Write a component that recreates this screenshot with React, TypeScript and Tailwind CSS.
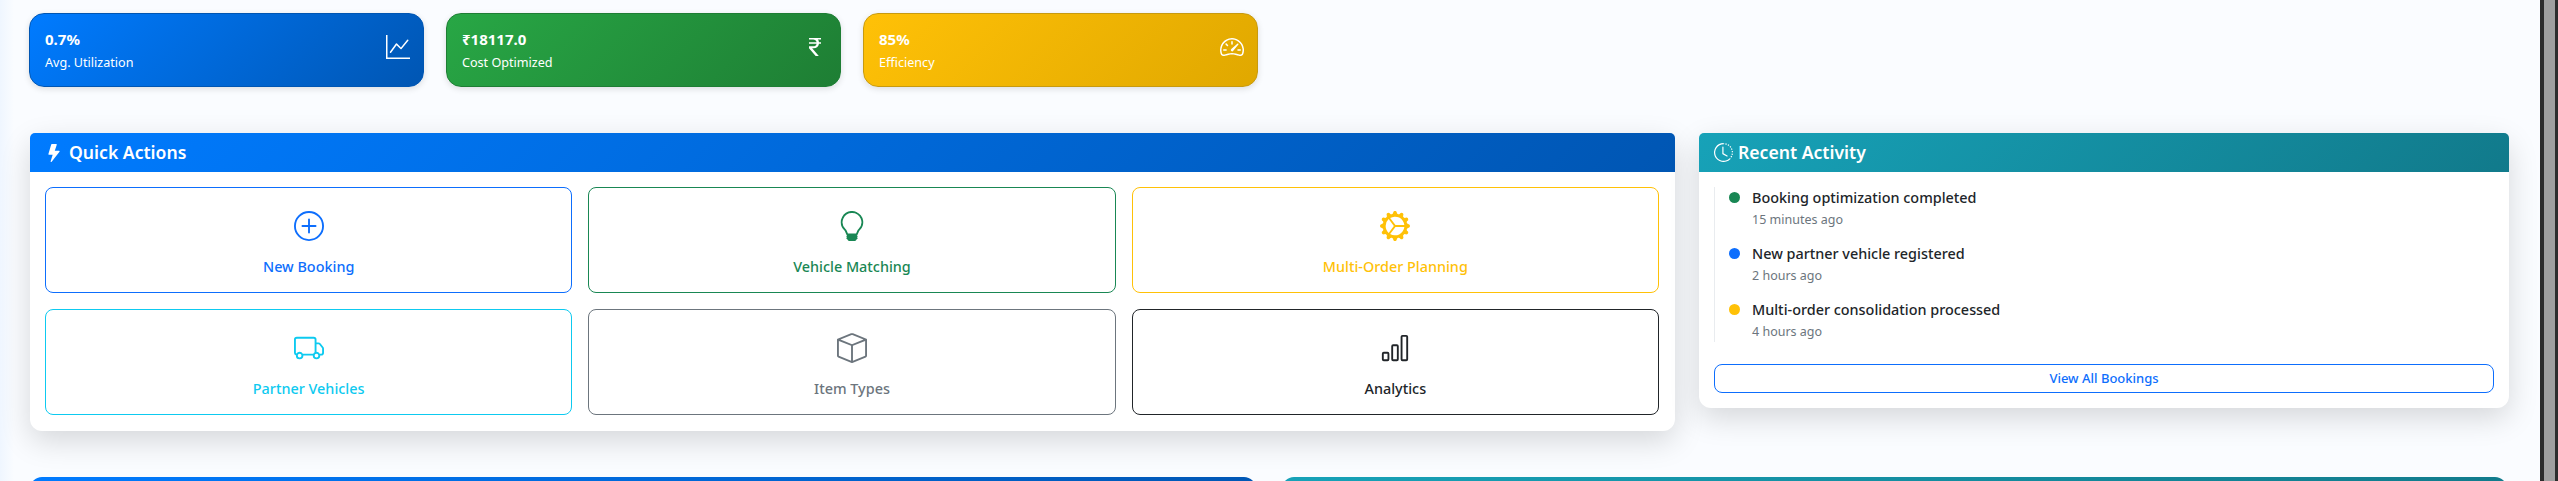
import React from "react";
import {
  BsGraphUp, BsCurrencyRupee, BsSpeedometer2, BsLightningFill, BsClockHistory,
  BsPlusCircle, BsLightbulb, BsGearWideConnected, BsTruck, BsBox, BsBarChart,
} from "react-icons/bs";

const stats = [
  { v: "0.7%", l: "Avg. Utilization", c: "bg-[linear-gradient(135deg,#007bff,#0056b3)] border-[#0056b3]", I: BsGraphUp },
  { v: "₹18117.0", l: "Cost Optimized", c: "bg-[linear-gradient(135deg,#28a745,#1e7e34)] border-[#1e7e34]", I: BsCurrencyRupee },
  { v: "85%", l: "Efficiency", c: "bg-[linear-gradient(135deg,#ffc107,#e0a800)] border-[#c79a10]", I: BsSpeedometer2 },
];

const actions = [
  { l: "New Booking", c: "border-[#0d6efd] text-[#0d6efd]", I: BsPlusCircle },
  { l: "Vehicle Matching", c: "border-[#198754] text-[#198754]", I: BsLightbulb },
  { l: "Multi-Order Planning", c: "border-[#ffc107] text-[#ffc107]", I: BsGearWideConnected },
  { l: "Partner Vehicles", c: "border-[#0dcaf0] text-[#0dcaf0]", I: BsTruck },
  { l: "Item Types", c: "border-[#6c757d] text-[#6c757d]", I: BsBox },
  { l: "Analytics", c: "border-[#212529] text-[#212529]", I: BsBarChart },
];

const activity = [
  { t: "Booking optimization completed", s: "15 minutes ago", c: "bg-[#198754]" },
  { t: "New partner vehicle registered", s: "2 hours ago", c: "bg-[#0d6efd]" },
  { t: "Multi-order consolidation processed", s: "4 hours ago", c: "bg-[#ffc107]" },
];

export default function App() {
  return (
    <div className="flex h-[481px] w-full overflow-hidden font-['Noto_Sans',sans-serif]">
      <main className="w-[2540px] shrink-0 overflow-hidden bg-[linear-gradient(90deg,#eff6ff_0px,#fafcff_14px)] pt-[13px]">
        <div className="flex gap-[22px] pl-[29px]">
          {stats.map(({ v, l, c, I }) => (
            <div key={l} className={`flex h-[74px] w-[395px] items-center justify-between rounded-[15px] border pr-[13px] pl-[15px] text-white shadow-[0_2px_6px_rgba(0,0,0,0.12)] ${c}`}>
              <div>
                <div className="text-[15px] leading-[21px] font-bold">{v}</div>
                <div className="mt-[4px] text-[12.6px] leading-[18px]">{l}</div>
              </div>
              <I className="mb-[6px] h-[24px] w-[24px]" />
            </div>
          ))}
        </div>

        <div className="mt-[46px] flex items-start gap-[24px] pl-[30px]">
          <section className="h-[298px] w-[1645px] rounded-[12px] bg-white shadow-[0_10px_30px_rgba(0,0,0,0.15)]">
            <header className="flex h-[39px] items-center gap-[6px] rounded-t-[5px] bg-[linear-gradient(135deg,#007bff,#0056b3)] pl-[15px] text-[17.6px] font-semibold text-white">
              <BsLightningFill className="h-[18px] w-[18px]" />
              <span>Quick Actions</span>
            </header>
            <div className="grid grid-cols-3 gap-x-[16px] gap-y-[16px] pt-[15px] pr-[16px] pl-[15px]">
              {actions.map(({ l, c, I }) => (
                <button key={l} className={`flex h-[106px] flex-col items-center justify-center rounded-[8px] border bg-white pt-[7px] ${c}`}>
                  <I className="h-[30px] w-[30px]" />
                  <span className="mt-[15px] text-[14.4px] leading-[21px] font-medium">{l}</span>
                </button>
              ))}
            </div>
          </section>

          <section className="h-[275px] w-[810px] rounded-[12px] bg-white shadow-[0_10px_30px_rgba(0,0,0,0.15)]">
            <header className="flex h-[39px] items-center gap-[5px] rounded-t-[5px] bg-[linear-gradient(135deg,#17a2b8,#117a8b)] pl-[15px] text-[17.6px] font-semibold text-white">
              <BsClockHistory className="h-[19px] w-[19px]" />
              <span>Recent Activity</span>
            </header>
            <div className="px-[15px] pt-[15px]">
              <ul className="flex h-[155px] flex-col gap-[14px] border-l border-[#e9ecef] pl-[14px]">
                {activity.map((a) => (
                  <li key={a.t}>
                    <div className="flex items-center gap-[12px] text-[14.4px] leading-[21px] font-medium text-[#212529]">
                      <span className={`h-[11px] w-[11px] rounded-full ${a.c}`} />
                      {a.t}
                    </div>
                    <div className="mt-[3px] pl-[23px] text-[12.5px] leading-[18px] text-[#6c757d]">{a.s}</div>
                  </li>
                ))}
              </ul>
              <button className="mt-[22px] h-[29px] w-full rounded-[8px] border border-[#0d6efd] bg-white pt-px text-[13px] font-medium text-[#0d6efd]">
                View All Bookings
              </button>
            </div>
          </section>
        </div>

        <div className="mt-[46px] flex gap-[26px] pl-[30px]">
          <div className="h-[39px] w-[1226px] rounded-t-[12px] bg-[linear-gradient(135deg,#007bff,#0056b3)]" />
          <div className="h-[39px] w-[1225px] rounded-t-[12px] bg-[linear-gradient(135deg,#17a2b8,#117a8b)]" />
        </div>
      </main>
      <div className="flex w-[18px] shrink-0 bg-[#2c2c2c] pr-[3px] pl-[4px]">
        <div className="h-full w-full bg-[#9f9f9f]" />
      </div>
    </div>
  );
}
